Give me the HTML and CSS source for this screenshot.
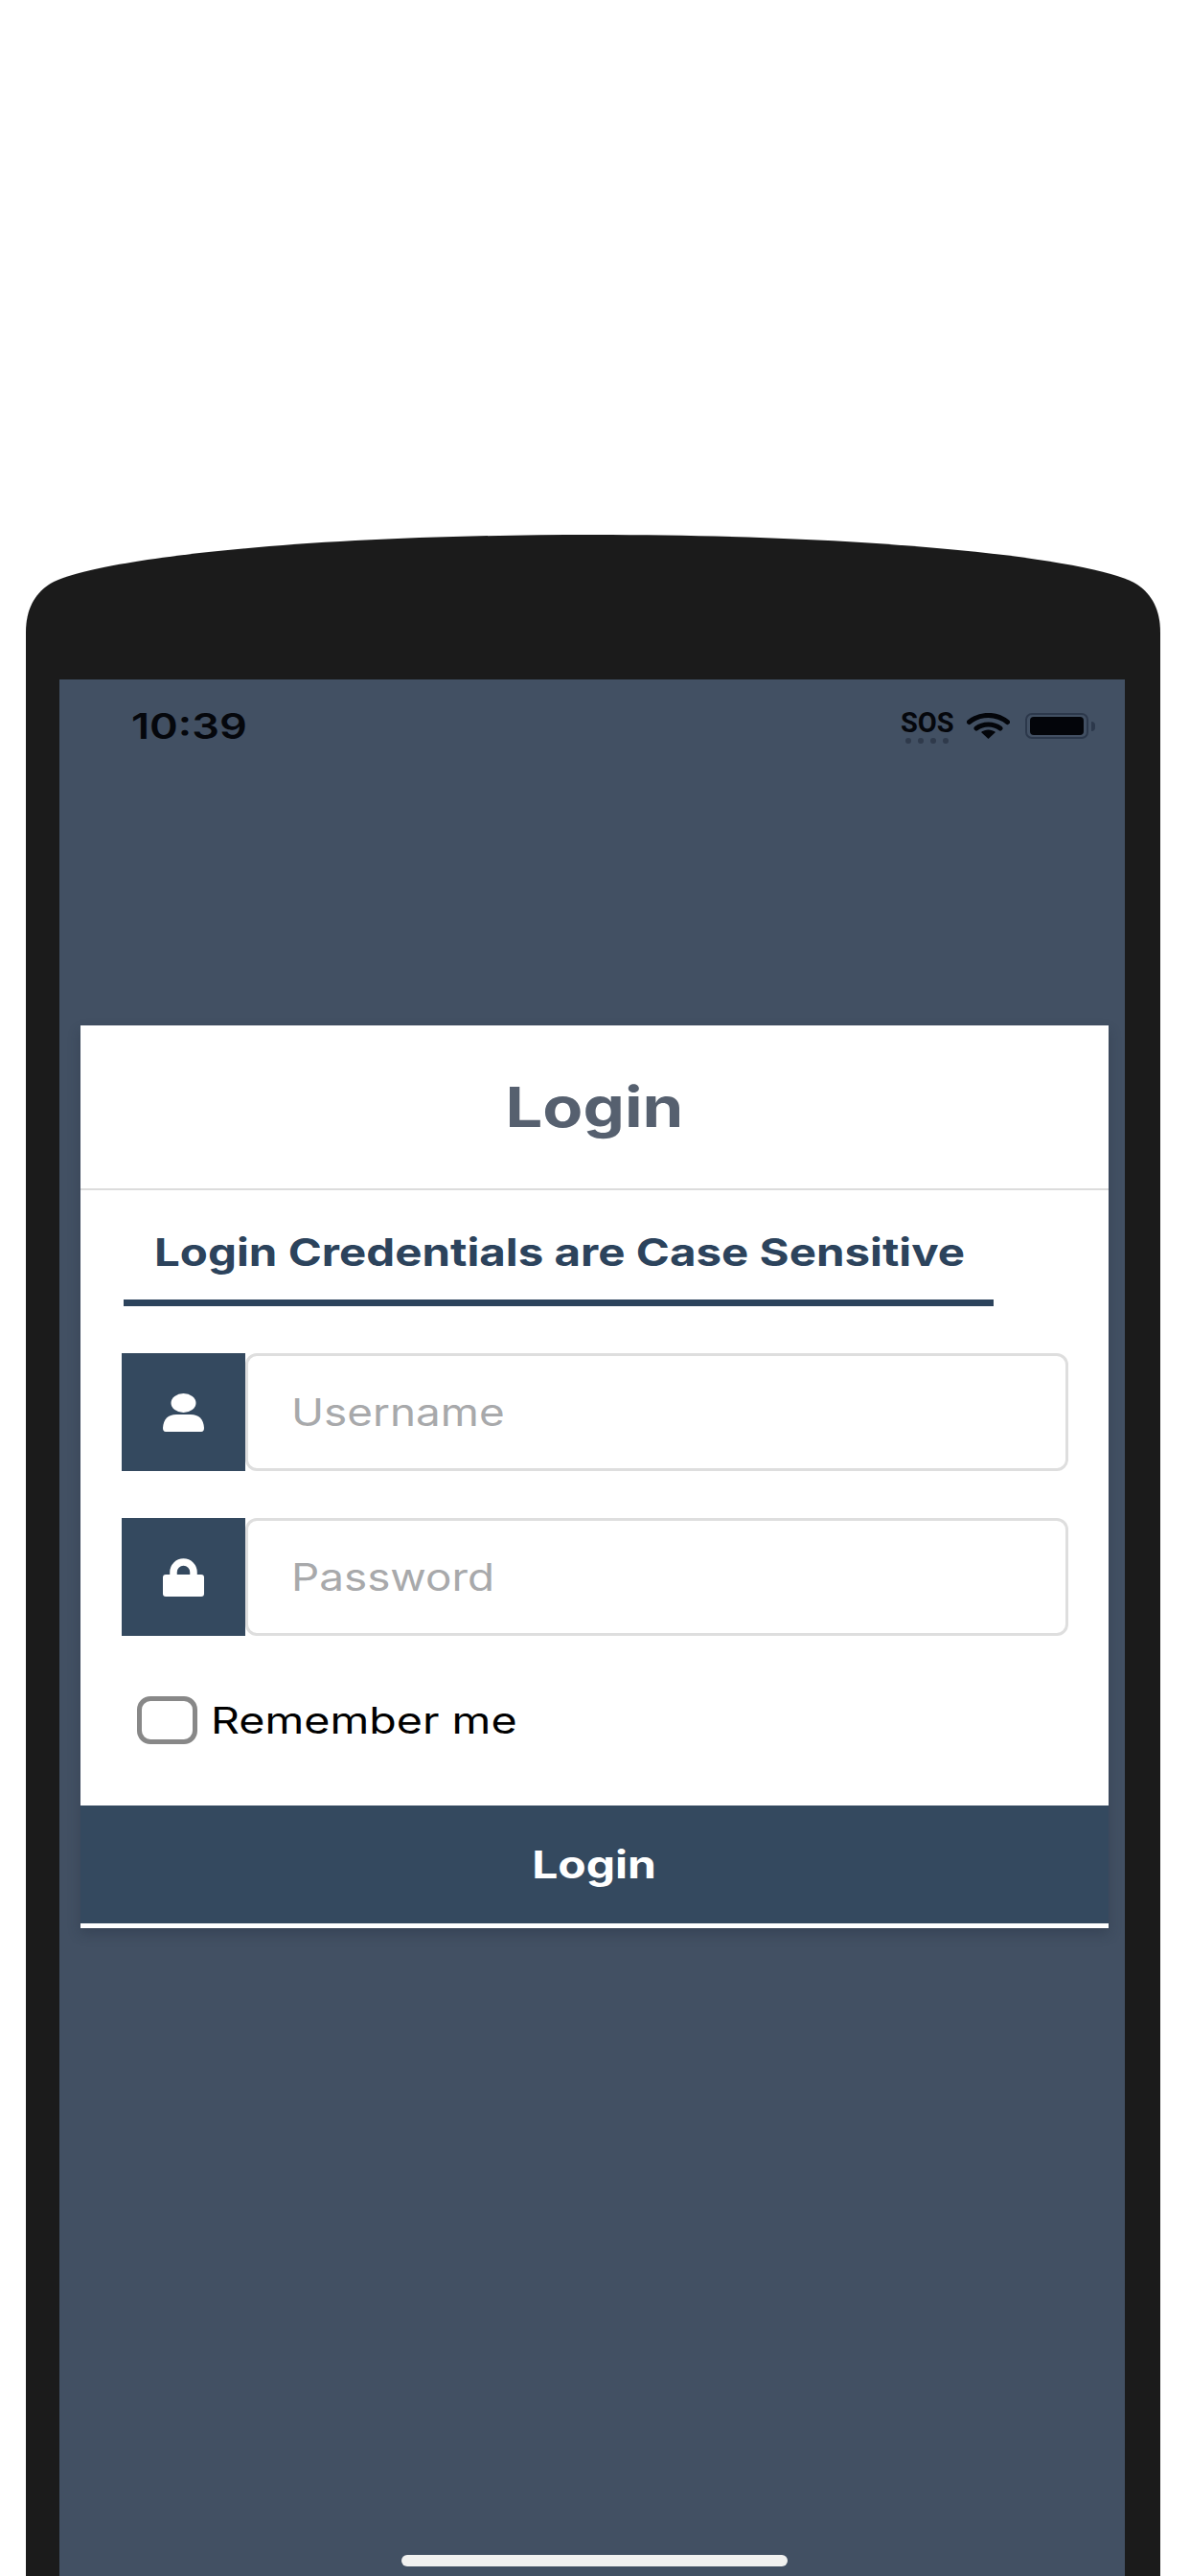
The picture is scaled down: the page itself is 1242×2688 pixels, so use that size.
FILE: index.html
```html
<!DOCTYPE html>
<html lang="en">
<head>
    <meta charset="UTF-8">
    <title>Login</title>
    <link rel="stylesheet" href="styles.css">
</head>
<body>
<div class="phone">
    <svg class="phone-cap" width="1184" height="151" viewBox="0 0 1184 151">
        <path fill="#1b1b1b" d="M0 151V102C0 78 9 62 24 52C60 28 270 0 592 0C914 0 1124 28 1160 52C1175 62 1184 78 1184 102V151Z"/>
    </svg>
    <div class="screen">
        <div class="status-bar">
            <span class="clock">10:39</span>
            <div class="status-icons">
                <div class="sos">
                    <span class="sos-text">SOS</span>
                    <div class="sos-dots"><i></i><i></i><i></i><i></i></div>
                </div>
                <svg class="wifi" width="45" height="27" viewBox="0 0 45 27">
                    <path d="M2.500 9.500C14 0 31 0 42.500 9.500" fill="none" stroke="#03050a" stroke-width="5" stroke-linecap="round"/>
                    <path d="M10 16C17 10.500 28 10.500 35 16" fill="none" stroke="#03050a" stroke-width="5" stroke-linecap="round"/>
                    <path d="M22.500 27L15 20C19 16.500 26 16.500 30 20Z" fill="#03050a"/>
                </svg>
                <div class="battery">
                    <div class="battery-body"><div class="battery-level"></div></div>
                    <div class="battery-tip"></div>
                </div>
            </div>
        </div>

        <div class="card">
            <div class="card-header">
                <h1 class="card-title"><span>Login</span></h1>
            </div>
            <div class="notice">
                <h2 class="notice-text"><span>Login Credentials are Case Sensitive</span></h2>
            </div>
            <div class="field">
                <div class="field-icon">
                    <svg width="43" height="40" viewBox="0 0 43 40">
                        <ellipse cx="21.500" cy="10" rx="13" ry="10" fill="#fff"/>
                        <path fill="#fff" d="M3 40Q0 40 0 36Q1 22 14 22H29Q42 22 43 36Q43 40 40 40Z"/>
                    </svg>
                </div>
                <div class="field-input"><span>Username</span></div>
            </div>
            <div class="field">
                <div class="field-icon">
                    <svg width="43" height="40" viewBox="0 0 43 40">
                        <path fill="none" stroke="#fff" stroke-width="7.500" d="M11 19V14.500A10.500 10.500 0 0 1 32 14.500V19"/>
                        <rect x="0" y="17" width="43" height="23" rx="3" fill="#fff"/>
                    </svg>
                </div>
                <div class="field-input"><span>Password</span></div>
            </div>
            <label class="remember">
                <span class="remember-box"></span>
                <span class="remember-text">Remember me</span>
            </label>
            <button class="login-button"><span>Login</span></button>
        </div>

        <div class="home-bar"></div>
    </div>
</div>
</body>
</html>
```

FILE: styles.css
```css
html, body {
    margin: 0;
    height: 2688px;
    overflow: hidden;
    background: #fff;
    font-family: Inter, "Liberation Sans", sans-serif;
}
.phone {
    width: 1184px;
    margin-left: 27px;
    padding-top: 558px;
}
.phone-cap {
    display: block;
}
.screen {
    height: 1979px;
    display: flex;
    flex-direction: column;
    background: #425063;
    border-left: 35px solid #1b1b1b;
    border-right: 37px solid #1b1b1b;
}
.status-bar {
    height: 361px;
    padding: 35px 31px 0 75px;
    box-sizing: border-box;
    display: flex;
    justify-content: space-between;
    align-items: flex-start;
    flex-shrink: 0;
}
.clock {
    display: inline-block;
    font-size: 37px;
    font-weight: 600;
    line-height: 27px;
    color: #05070c;
    transform: scaleX(1.22);
    transform-origin: left center;
}
.status-icons {
    display: flex;
    align-items: flex-start;
    gap: 15px;
}
.sos {
    width: 54px;
}
.sos-text {
    display: block;
    font-family: Roboto, sans-serif;
    font-size: 29px;
    font-weight: 700;
    line-height: 21px;
    text-align: center;
    color: #05070c;
}
.sos-dots {
    display: flex;
    justify-content: center;
    gap: 7px;
    margin-top: 5px;
}
.sos-dots i {
    width: 6px;
    height: 6px;
    border-radius: 50%;
    background: #2f3a4b;
}
.wifi {
    display: block;
}
.battery {
    display: flex;
    align-items: center;
    gap: 3px;
    margin-left: 1px;
}
.battery-body {
    width: 66px;
    height: 27px;
    box-sizing: border-box;
    padding: 2px 3px;
    border: 2px solid #2c384b;
    border-radius: 7px;
}
.battery-level {
    height: 100%;
    background: #03050a;
    border-radius: 4px;
}
.battery-tip {
    width: 4px;
    height: 10px;
    background: #2c384b;
    border-radius: 0 4px 4px 0;
}
.card {
    margin: 0 17px 0 22px;
    background: #fff;
    box-shadow: 0 6px 12px rgba(30, 40, 55, 0.3);
    padding-bottom: 5px;
}
.card-header {
    height: 170px;
    display: flex;
    align-items: center;
    justify-content: center;
    border-bottom: 2px solid #dcdcdc;
}
.card-title {
    margin: 0;
    font-size: 58px;
    font-weight: 700;
    line-height: 70px;
    color: #56606f;
}
.card-title span,
.notice-text span,
.login-button span,
.field-input span,
.remember-text {
    display: inline-block;
}
.card-title span {
    transform: scaleX(1.185);
}
.notice {
    width: 908px;
    height: 121px;
    margin: 0 0 49px 45px;
    box-sizing: border-box;
    padding: 42px 0 0 32px;
    border-bottom: 7px solid #2c435c;
}
.notice-text {
    margin: 0;
    font-size: 40px;
    font-weight: 700;
    line-height: 46px;
    color: #2c435c;
    white-space: nowrap;
}
.notice-text span {
    transform: scaleX(1.187);
    transform-origin: left center;
}
.field {
    display: flex;
    height: 123px;
    margin: 0 42px 49px 43px;
}
.field-icon {
    width: 129px;
    flex-shrink: 0;
    display: flex;
    align-items: center;
    justify-content: center;
    background: #34495f;
}
.field-input {
    flex: 1;
    display: flex;
    align-items: center;
    padding-left: 45px;
    border: 3px solid #dedede;
    border-radius: 12px;
    font-size: 39px;
    color: #a8a9ab;
}
.field-input span {
    transform: scaleX(1.175);
    transform-origin: left center;
}
.remember {
    display: flex;
    align-items: center;
    height: 50px;
    margin: 63px 0 64px 59px;
}
.remember-box {
    width: 63px;
    height: 50px;
    box-sizing: border-box;
    border: 5px solid #888;
    border-radius: 14px;
}
.remember-text {
    margin-left: 14px;
    font-size: 38px;
    color: #000;
    transform: scaleX(1.226);
    transform-origin: left center;
}
.login-button {
    display: block;
    width: 100%;
    height: 123px;
    padding: 0;
    border: none;
    background: #34495f;
    color: #fff;
    font-family: inherit;
    font-size: 40px;
    font-weight: 700;
}
.login-button span {
    transform: scaleX(1.2);
}
.home-bar {
    width: 403px;
    height: 12px;
    margin: auto 0 10px 357px;
    background: #f1f1f0;
    border-radius: 6px;
}
```
